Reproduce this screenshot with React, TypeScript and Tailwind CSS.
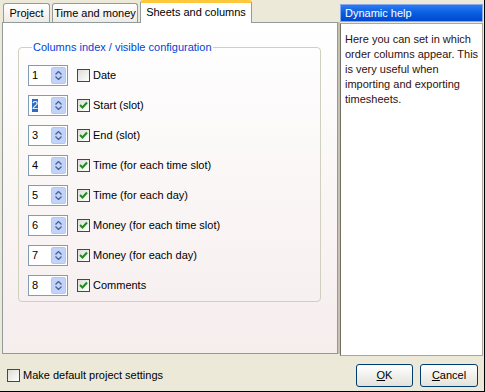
import React from 'react';

const rows = [
  { n: '1', label: 'Date', checked: false },
  { n: '2', label: 'Start (slot)', checked: true, selected: true },
  { n: '3', label: 'End (slot)', checked: true },
  { n: '4', label: 'Time (for each time slot)', checked: true },
  { n: '5', label: 'Time (for each day)', checked: true },
  { n: '6', label: 'Money (for each time slot)', checked: true },
  { n: '7', label: 'Money (for each day)', checked: true },
  { n: '8', label: 'Comments', checked: true },
];

const Check = ({ checked }: { checked: boolean }) => (
  <div className="w-[13px] h-[13px] border border-[#1C5180] bg-gradient-to-br from-[#DCDCD7] to-white flex items-center justify-center shrink-0">
    {checked && (
      <svg width="9" height="9" viewBox="0 0 9 9">
        <path d="M1 4 L3.5 6.5 L8 1.5" stroke="#218A21" strokeWidth="2" fill="none" />
      </svg>
    )}
  </div>
);

const Spin = ({ value, selected }: { value: string; selected?: boolean }) => (
  <div className="w-[40px] h-[21px] border border-[#7F9DB9] bg-white flex items-center justify-between pl-[3px] pr-[1px]">
    <span className={selected ? 'bg-[#316AC5] text-white leading-[13px]' : 'leading-[13px]'}>{value}</span>
    <div className="w-[15px] h-[17px] rounded-[2px] bg-[#C1D3FB] border border-[#B4C8F6] flex flex-col items-center justify-center gap-[1px]">
      <svg width="7" height="4" viewBox="0 0 7 4">
        <path d="M0.5 3.5 L3.5 0.5 L6.5 3.5" stroke="#4D6185" strokeWidth="1.3" fill="none" />
      </svg>
      <svg width="7" height="4" viewBox="0 0 7 4">
        <path d="M0.5 0.5 L3.5 3.5 L6.5 0.5" stroke="#4D6185" strokeWidth="1.3" fill="none" />
      </svg>
    </div>
  </div>
);

const XpButton = ({ first, rest, w }: { first: string; rest: string; w: string }) => (
  <button className={`${w} h-[23px] border border-[#003C74] rounded-[3px] bg-gradient-to-b from-white to-[#E3E2DA] text-black text-[11px]`}>
    <span className="underline">{first}</span>
    {rest}
  </button>
);

export default function App() {
  return (
    <div
      className="w-[485px] h-[392px] bg-[#ECE9D8] border-r border-b border-black text-[11px] text-black flex flex-col overflow-hidden"
      style={{ fontFamily: '"Liberation Sans", Arial, sans-serif' }}
    >
      <div className="flex h-[356px]">
        {/* Tab control */}
        <div className="ml-[2px] w-[336px] flex flex-col">
          <div className="h-[22px] flex items-end pl-[1px] gap-[2px] relative z-10">
            <div className="w-[47px] h-[19px] border border-b-0 border-[#919B9C] rounded-t-[3px] bg-gradient-to-b from-white to-[#ECEBE6] flex items-center justify-center">
              Project
            </div>
            <div className="w-[86px] h-[19px] border border-b-0 border-[#919B9C] rounded-t-[3px] bg-gradient-to-b from-white to-[#ECEBE6] flex items-center justify-center">
              Time and money
            </div>
            <div className="w-[112px] h-[23px] -mb-px border-x border-[#919B9C] border-t-[3px] border-t-[#FFC83C] rounded-t-[3px] bg-white flex items-center justify-center pb-[2px]">
              Sheets and columns
            </div>
          </div>
          <div className="h-[332px] border border-[#919B9C] bg-gradient-to-b from-white to-[#F6EDED] shadow-[2px_0_0_#C5C2B2] pl-[15px] pt-[16px]">
            <fieldset className="w-[303px] h-[263px] border border-[#D0D0BF] rounded-[4px] px-[9px] pt-[9px] m-0">
              <legend className="text-[#0046D5] px-[1px] ml-[4px]">Columns index / visible configuration</legend>
              <div className="flex flex-col gap-[9px]">
                {rows.map((r) => (
                  <div key={r.n} className="flex items-center h-[21px]">
                    <Spin value={r.n} selected={r.selected} />
                    <div className="ml-[9px]">
                      <Check checked={r.checked} />
                    </div>
                    <span className="ml-[3px]">{r.label}</span>
                  </div>
                ))}
              </div>
            </fieldset>
          </div>
        </div>

        {/* Dynamic help */}
        <div className="ml-[2px] mt-[4px] w-[143px] flex flex-col">
          <div className="h-[18px] bg-gradient-to-b from-[#2A7BF5] via-[#0A5DDF] to-[#0048D0] text-white pl-[4px] flex items-center border border-[#8BA9E6]">
            Dynamic help
          </div>
          <div className="flex-1 mt-[1px] bg-white border border-[#ACA899] border-l-[#716F64] pl-[4px] pt-[8px] leading-[15px] text-[#301010] whitespace-nowrap overflow-hidden">
            Here you can set in which
            <br />
            order columns appear. This
            <br />
            is very useful when
            <br />
            importing and exporting
            <br />
            timesheets.
          </div>
        </div>
      </div>

      {/* Bottom bar */}
      <div className="flex-1 flex items-center justify-between pl-[7px] pr-[6px] pt-[3px]">
        <div className="flex items-center gap-[3px]">
          <Check checked={false} />
          <span>Make default project settings</span>
        </div>
        <div className="flex gap-[7px]">
          <XpButton first="O" rest="K" w="w-[57px]" />
          <XpButton first="C" rest="ancel" w="w-[58px]" />
        </div>
      </div>
    </div>
  );
}
